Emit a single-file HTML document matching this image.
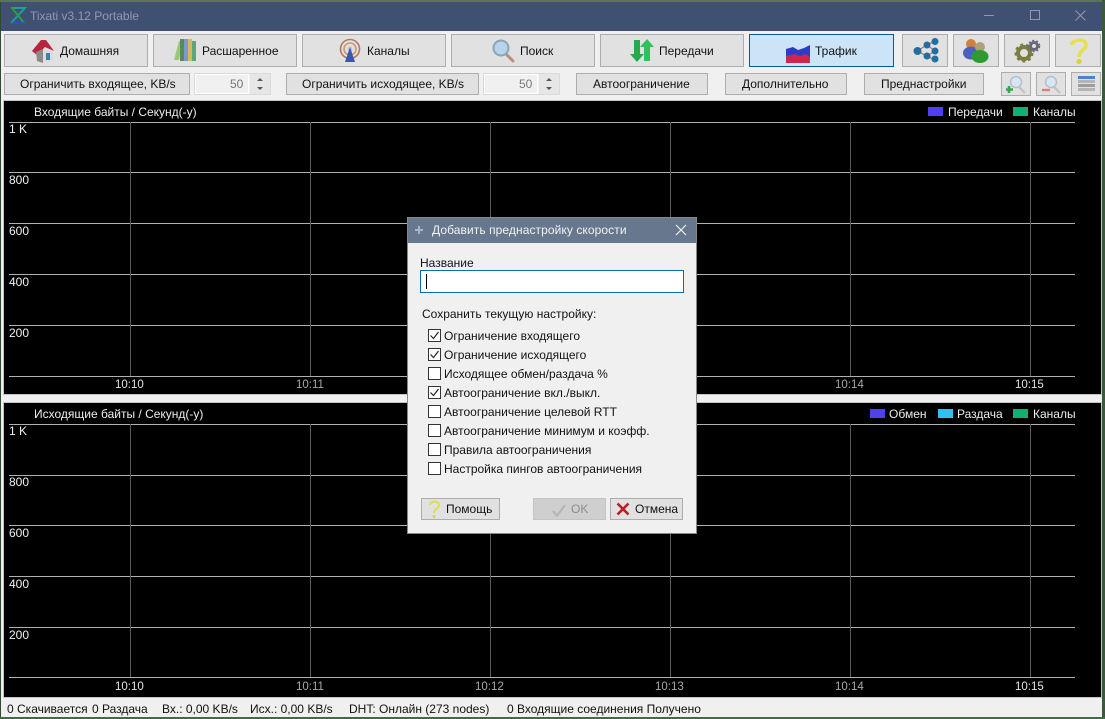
<!DOCTYPE html>
<html><head><meta charset="utf-8"><style>
html,body{margin:0;padding:0;background:#2f4a33;width:1105px;height:719px;overflow:hidden}
*{box-sizing:border-box}
body{position:relative;font-family:"Liberation Sans",sans-serif;font-size:12px;color:#111}
.a{position:absolute}
.t{position:absolute;white-space:nowrap;line-height:16px;height:16px}
.b{position:absolute;background:#e1e1e1;border:1px solid #adadad}
.w{color:#eee}
.l{position:absolute;background:#8c8c8c}
.h{position:absolute;left:9px;width:1066px;height:1px;background:#b0b0b0}
.v{position:absolute;width:1px;background:#5a5a5a}
.n{color:#f0f0f0;left:9px}
.x{font-size:11.5px;color:#e4e4e4}
.y{font-size:11.5px;color:#a8a8a8}
.bk{position:absolute;left:4px;width:1097px;height:293px;background:#000;outline:1px solid #c4c4c4}
.cb{position:absolute;left:428px;width:13px;height:13px;background:#fff;border:1px solid #333}
</style></head><body>
<div class="a" style="left:0;top:0;width:1105px;height:2px;background:#5f7358"></div>
<div class="a" style="left:1102px;top:0;width:3px;height:719px;background:#3a5a3c"></div>
<div class="a" style="left:0;top:717px;width:1105px;height:2px;background:#3f6b45"></div>
<div class="a" style="left:1px;top:2px;width:1101px;height:29px;background:#3f5072"></div>
<div class="a" style="left:1px;top:31px;width:1101px;height:686px;background:#f0f0f0"></div>
<svg class="a" style="left:9px;top:6px" width="18" height="19"><path d="M2 2H16L2 17" fill="none" stroke="#1aa0a0" stroke-width="2"/><path d="M3 2L15 17" stroke="#2c9e3c" stroke-width="2"/><path d="M3 17H15" stroke="#3050c0" stroke-width="2"/></svg>
<div class="t" style="left:30px;top:8px;color:#8d9aae">Tixati v3.12 Portable</div>
<div class="l" style="left:984px;top:15px;width:10px;height:1px;background:#8d9aae"></div>
<div class="a" style="left:1030px;top:10px;width:10px;height:10px;border:1px solid #8d9aae"></div>
<svg class="a" style="left:1075px;top:10px" width="11" height="11"><path d="M.5.5L10.500 10.500M10.500.5L.5 10.500" stroke="#8d9aae"/></svg>

<!-- toolbar -->
<div class="b" style="left:4px;top:34px;width:144px;height:33px"></div>
<div class="b" style="left:153px;top:34px;width:144px;height:33px"></div>
<div class="b" style="left:302px;top:34px;width:144px;height:33px"></div>
<div class="b" style="left:451px;top:34px;width:144px;height:33px"></div>
<div class="b" style="left:600px;top:34px;width:144px;height:33px"></div>
<div class="b" style="left:749px;top:34px;width:145px;height:33px;background:#cce4f7;border-color:#005a9e"></div>
<div class="b" style="left:902px;top:34px;width:46px;height:33px"></div>
<div class="b" style="left:953px;top:34px;width:46px;height:33px"></div>
<div class="b" style="left:1004px;top:34px;width:46px;height:33px"></div>
<div class="b" style="left:1055px;top:34px;width:46px;height:33px"></div>
<div class="t" style="left:60px;top:43px">Домашняя</div>
<div class="t" style="left:202px;top:43px">Расшаренное</div>
<div class="t" style="left:367px;top:43px">Каналы</div>
<div class="t" style="left:520px;top:43px">Поиск</div>
<div class="t" style="left:659px;top:43px">Передачи</div>
<div class="t" style="left:815px;top:43px">Трафик</div>

<svg class="a" style="left:30px;top:38px" width="26" height="26"><path d="M5 12L14 4L23 14V23H8Z" fill="#dcdcdc"/><path d="M2 13L11 2H16L24 13L15 9L7 17Z" fill="#b8243c"/><path d="M6 14L7 23L13 25V11Z" fill="#8a8a8a"/><rect x="16" y="15" width="4" height="7" fill="#3f7fb0"/></svg>
<svg class="a" style="left:172px;top:38px" width="26" height="24"><path d="M2 22L7 3L10 4L7 22Z" fill="#98c878"/><rect x="8" y="1" width="4" height="22" fill="#5a8a58"/><rect x="12" y="1" width="4" height="22" fill="#7a9cc8"/><rect x="16" y="1" width="4" height="22" fill="#d8b85c"/><rect x="20" y="3" width="4" height="20" fill="#5aa878"/></svg>
<svg class="a" style="left:338px;top:38px" width="24" height="25"><circle cx="12" cy="11" r="9.500" fill="none" stroke="#b87858" stroke-width="1.600"/><circle cx="12" cy="11" r="6" fill="none" stroke="#c89878" stroke-width="1.600"/><circle cx="12" cy="11" r="2.500" fill="#c0c8d8"/><path d="M12 9L17 24H7Z" fill="#3858b0"/></svg>
<svg class="a" style="left:491px;top:38px" width="24" height="25"><path d="M13 14L22 23" stroke="#b89080" stroke-width="3" stroke-linecap="round"/><circle cx="10" cy="10" r="7.500" fill="#b8d4ea" stroke="#8ca4b4" stroke-width="2"/></svg>
<svg class="a" style="left:629px;top:37px" width="26" height="26"><path d="M5 3H11V17H15L8 25L1 17H5Z" fill="#2aa84c"/><path d="M15 24H21V10H25L18 2L11 10H15Z" fill="#30c060"/></svg>
<svg class="a" style="left:786px;top:45px" width="24" height="18"><path d="M0 4L7 2L12 5L18 3L24 0V18H0Z" fill="#2c3cc8"/><path d="M0 11L9 9L14 11L20 9L24 12V18H0Z" fill="#c82850"/></svg>
<svg class="a" style="left:913px;top:38px" width="26" height="25"><path d="M4 13L14 7L22 3M14 7L22 13M4 13L14 18L22 22M14 18L22 13" stroke="#c05850" fill="none"/><g fill="#1f6fa0"><circle cx="4.500" cy="13" r="4"/><circle cx="14" cy="7" r="3.500"/><circle cx="22" cy="3.500" r="3.500"/><circle cx="22" cy="13" r="3.500"/><circle cx="14" cy="18" r="3.500"/><circle cx="22" cy="21" r="3.500"/></g></svg>
<svg class="a" style="left:963px;top:38px" width="27" height="25"><circle cx="8" cy="6" r="5" fill="#d0803c"/><ellipse cx="8" cy="15" rx="8" ry="6.500" fill="#4c60c0"/><circle cx="17" cy="9" r="5" fill="#b0a078"/><ellipse cx="17" cy="18.500" rx="8.500" ry="6.500" fill="#2c9c30"/></svg>
<svg class="a" style="left:1013px;top:39px" width="30" height="24"><circle cx="11" cy="14" r="6" fill="none" stroke="#7c7c40" stroke-width="4"/><circle cx="11" cy="14" r="8.500" fill="none" stroke="#7c7c40" stroke-width="2" stroke-dasharray="3 3"/><circle cx="21" cy="7" r="3.500" fill="none" stroke="#686878" stroke-width="3"/><circle cx="21" cy="7" r="5.500" fill="none" stroke="#686878" stroke-width="1.500" stroke-dasharray="2 2"/></svg>
<svg class="a" style="left:1069px;top:37px" width="20" height="28"><path d="M3 8C3 2 17 1 17 8C17 13 10 13 10 20" fill="none" stroke="#e4e050" stroke-width="3.600"/><circle cx="10" cy="24.500" r="2.600" fill="#d8d440"/></svg>

<!-- row 2 -->
<div class="b" style="left:4px;top:73px;width:186px;height:22px"></div>
<div class="t" style="left:20px;top:76px">Ограничить входящее, KB/s</div>
<div class="a" style="left:194px;top:73px;width:77px;height:22px;background:#f0f0f0;border:1px solid #d9d9d9"></div>
<div class="a" style="left:195px;top:74px;width:54px;height:20px;border:1px solid #fff"></div>
<div class="t" style="left:230px;top:76px;color:#777">50</div>
<div class="a" style="left:250px;top:74px;width:20px;height:20px;background:#e6e6e6"></div>
<svg class="a" style="left:250px;top:74px" width="20" height="20"><path d="M7 7L10 4L13 7ZM7 13L10 16L13 13Z" fill="#555"/></svg>
<div class="b" style="left:286px;top:73px;width:193px;height:22px"></div>
<div class="t" style="left:302px;top:76px">Ограничить исходящее, KB/s</div>
<div class="a" style="left:483px;top:73px;width:77px;height:22px;background:#f0f0f0;border:1px solid #d9d9d9"></div>
<div class="a" style="left:484px;top:74px;width:54px;height:20px;border:1px solid #fff"></div>
<div class="t" style="left:519px;top:76px;color:#777">50</div>
<div class="a" style="left:539px;top:74px;width:20px;height:20px;background:#e6e6e6"></div>
<svg class="a" style="left:539px;top:74px" width="20" height="20"><path d="M7 7L10 4L13 7ZM7 13L10 16L13 13Z" fill="#555"/></svg>
<div class="b" style="left:576px;top:73px;width:132px;height:22px"></div>
<div class="t" style="left:593px;top:76px">Автоограничение</div>
<div class="b" style="left:725px;top:73px;width:122px;height:22px"></div>
<div class="t" style="left:742px;top:76px">Дополнительно</div>
<div class="b" style="left:864px;top:73px;width:120px;height:22px"></div>
<div class="t" style="left:881px;top:76px">Преднастройки</div>
<div class="b" style="left:1001px;top:72px;width:30px;height:24px"></div>
<div class="b" style="left:1036px;top:72px;width:30px;height:24px"></div>
<div class="b" style="left:1071px;top:72px;width:30px;height:24px"></div>
<svg class="a" style="left:1006px;top:75px" width="22" height="20"><path d="M12 11L19 18" stroke="#c4c4c4" stroke-width="2.400"/><circle cx="10" cy="7" r="5.500" fill="#d8e6f2" stroke="#b4c0ca" stroke-width="1.500"/><path d="M3 11V18M0 14.500H7" stroke="#30a850" stroke-width="2.600"/></svg>
<svg class="a" style="left:1041px;top:75px" width="22" height="20"><path d="M12 11L19 18" stroke="#c4c4c4" stroke-width="2.400"/><circle cx="10" cy="7" r="5.500" fill="#d8e6f2" stroke="#b4c0ca" stroke-width="1.500"/><path d="M1 15H9" stroke="#d88080" stroke-width="2.400"/></svg>
<svg class="a" style="left:1078px;top:76px" width="17" height="16"><rect width="17" height="3" fill="#4c80d8"/><rect y="4" width="17" height="3" fill="#b4b4b4"/><rect y="8" width="17" height="3" fill="#9c9c9c"/><rect y="12" width="17" height="3" fill="#b4b4b4"/></svg>

<!-- graph 1 -->
<div class="bk" style="top:101px"></div>
<div class="t w" style="left:34px;top:104px">Входящие байты / Секунд(-у)</div>
<div class="h" style="top:122px"></div><div class="h" style="top:172px"></div><div class="h" style="top:223px"></div><div class="h" style="top:274px"></div><div class="h" style="top:325px"></div><div class="h" style="top:376px"></div>
<div class="v" style="left:130px;top:122px;height:254px"></div><div class="v" style="left:310px;top:122px;height:254px"></div><div class="v" style="left:490px;top:122px;height:254px"></div><div class="v" style="left:670px;top:122px;height:254px"></div><div class="v" style="left:850px;top:122px;height:254px"></div><div class="v" style="left:1030px;top:122px;height:254px"></div>
<div class="t n" style="top:121px">1 K</div><div class="t n" style="top:172px">800</div><div class="t n" style="top:223px">600</div><div class="t n" style="top:274px">400</div><div class="t n" style="top:325px">200</div>
<div class="t x" style="left:115px;top:377px">10:10</div>
<div class="t y" style="left:296px;top:377px">10:11</div>
<div class="t y" style="left:835px;top:377px">10:14</div>
<div class="t x" style="left:1015px;top:377px">10:15</div>
<div class="a" style="left:928px;top:107px;width:15px;height:9px;background:#5040f0"></div>
<div class="t w" style="left:948px;top:104px">Передачи</div>
<div class="a" style="left:1013px;top:107px;width:15px;height:9px;background:#10b070"></div>
<div class="t w" style="left:1033px;top:104px">Каналы</div>

<!-- graph 2 -->
<div class="bk" style="top:403px;height:294px"></div>
<div class="t w" style="left:34px;top:406px">Исходящие байты / Секунд(-у)</div>
<div class="h" style="top:424px"></div><div class="h" style="top:475px"></div><div class="h" style="top:525px"></div><div class="h" style="top:576px"></div><div class="h" style="top:627px"></div><div class="h" style="top:677px"></div>
<div class="v" style="left:130px;top:424px;height:253px"></div><div class="v" style="left:310px;top:424px;height:253px"></div><div class="v" style="left:490px;top:424px;height:253px"></div><div class="v" style="left:670px;top:424px;height:253px"></div><div class="v" style="left:850px;top:424px;height:253px"></div><div class="v" style="left:1030px;top:424px;height:253px"></div>
<div class="t n" style="top:423px">1 K</div><div class="t n" style="top:474px">800</div><div class="t n" style="top:525px">600</div><div class="t n" style="top:576px">400</div><div class="t n" style="top:627px">200</div>
<div class="t x" style="left:115px;top:679px">10:10</div>
<div class="t y" style="left:296px;top:679px">10:11</div>
<div class="t y" style="left:475px;top:679px">10:12</div>
<div class="t y" style="left:655px;top:679px">10:13</div>
<div class="t y" style="left:835px;top:679px">10:14</div>
<div class="t x" style="left:1015px;top:679px">10:15</div>
<div class="a" style="left:870px;top:409px;width:15px;height:9px;background:#5040f0"></div>
<div class="t w" style="left:889px;top:406px">Обмен</div>
<div class="a" style="left:938px;top:409px;width:15px;height:9px;background:#30c0f0"></div>
<div class="t w" style="left:957px;top:406px">Раздача</div>
<div class="a" style="left:1013px;top:409px;width:15px;height:9px;background:#10b070"></div>
<div class="t w" style="left:1033px;top:406px">Каналы</div>

<!-- status -->
<div class="t" style="left:7px;top:701px">0 Скачивается</div>
<div class="t" style="left:92px;top:701px">0 Раздача</div>
<div class="t" style="left:162px;top:701px">Вх.: 0,00 KB/s</div>
<div class="t" style="left:250px;top:701px">Исх.: 0,00 KB/s</div>
<div class="t" style="left:349px;top:701px">DHT: Онлайн (273 nodes)</div>
<div class="t" style="left:507px;top:701px">0 Входящие соединения Получено</div>

<!-- dialog -->
<div class="a" style="left:407px;top:217px;width:290px;height:317px;background:#f0f0f0;border:1px solid #888"></div>
<div class="a" style="left:408px;top:218px;width:288px;height:25px;background:#67778e"></div>
<svg class="a" style="left:414px;top:225px" width="10" height="10"><path d="M5 1V9M1 5H9" stroke="#a8b4c8" stroke-width="2"/></svg>
<div class="t" style="left:432px;top:222px;color:#f2f2f2;letter-spacing:.08px">Добавить преднастройку скорости</div>
<svg class="a" style="left:675px;top:224px" width="12" height="12"><path d="M1 1L11 11M11 1L1 11" stroke="#f0f0f0" stroke-width="1.200"/></svg>
<div class="t" style="left:420px;top:255px">Название</div>
<div class="a" style="left:420px;top:270px;width:264px;height:23px;background:#fff;border:1px solid #0f6cab"></div>
<div class="a" style="left:426px;top:274px;width:1px;height:15px;background:#000"></div>
<div class="t" style="left:422px;top:306px">Сохранить текущую настройку:</div>

<div class="cb" style="top:329px"></div><div class="t" style="left:444px;top:328px">Ограничение входящего</div>
<div class="cb" style="top:348px"></div><div class="t" style="left:444px;top:347px">Ограничение исходящего</div>
<div class="cb" style="top:367px"></div><div class="t" style="left:444px;top:366px">Исходящее обмен/раздача %</div>
<div class="cb" style="top:386px"></div><div class="t" style="left:444px;top:385px">Автоограничение вкл./выкл.</div>
<div class="cb" style="top:405px"></div><div class="t" style="left:444px;top:404px">Автоограничение целевой RTT</div>
<div class="cb" style="top:424px"></div><div class="t" style="left:444px;top:423px">Автоограничение минимум и коэфф.</div>
<div class="cb" style="top:443px"></div><div class="t" style="left:444px;top:442px">Правила автоограничения</div>
<div class="cb" style="top:462px"></div><div class="t" style="left:444px;top:461px">Настройка пингов автоограничения</div>
<svg class="a" style="left:428px;top:329px" width="13" height="13"><path d="M2.500 6.500L5.500 9.500L10.500 3" fill="none" stroke="#222" stroke-width="1.200"/></svg>
<svg class="a" style="left:428px;top:348px" width="13" height="13"><path d="M2.500 6.500L5.500 9.500L10.500 3" fill="none" stroke="#222" stroke-width="1.200"/></svg>
<svg class="a" style="left:428px;top:386px" width="13" height="13"><path d="M2.500 6.500L5.500 9.500L10.500 3" fill="none" stroke="#222" stroke-width="1.200"/></svg>

<div class="b" style="left:421px;top:498px;width:79px;height:22px"></div>
<svg class="a" style="left:428px;top:500px" width="13" height="19"><path d="M2 5C2 1 11 0 11 5C11 9 6 9 6 13" fill="none" stroke="#e0dc50" stroke-width="2"/><circle cx="6" cy="16.500" r="1.500" fill="#d8d440"/></svg>
<div class="t" style="left:446px;top:501px">Помощь</div>
<div class="a" style="left:533px;top:498px;width:73px;height:22px;background:#cfcfcf;border:1px solid #c4c4c4"></div>
<svg class="a" style="left:552px;top:503px" width="14" height="14"><path d="M1 8L5 13L13 2" fill="none" stroke="#b4b4b4" stroke-width="2"/></svg>
<div class="t" style="left:571px;top:501px;color:#8c8c8c">OK</div>
<div class="b" style="left:610px;top:498px;width:73px;height:22px"></div>
<svg class="a" style="left:616px;top:502px" width="14" height="14"><path d="M1.500 1.500L12.500 12.500M12.500 1.500L1.500 12.500" stroke="#b82028" stroke-width="2.600"/></svg>
<div class="t" style="left:635px;top:501px">Отмена</div>
</body></html>
